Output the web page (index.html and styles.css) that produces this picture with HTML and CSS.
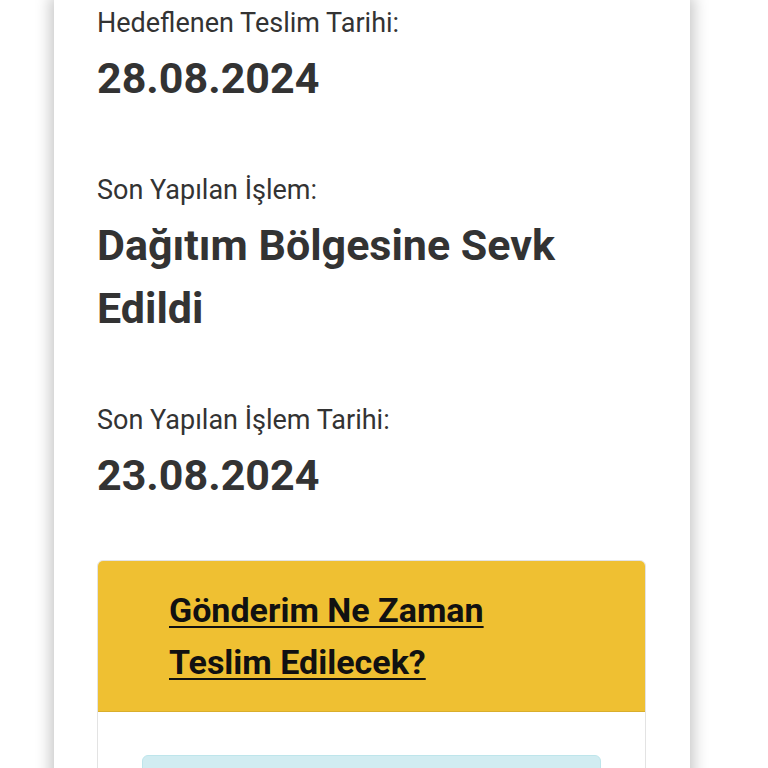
FILE: index.html
```html
<!DOCTYPE html>
<html lang="tr">
<head>
<meta charset="utf-8">
<link rel="stylesheet" href="styles.css">
</head>
<body>
<div class="page">
  <div class="card">
    <div class="fields">
      <div class="field">
        <div class="label">Hedeflenen Teslim Tarihi:</div>
        <div class="value">28.08.2024</div>
      </div>
      <div class="field">
        <div class="label">Son Yapılan İşlem:</div>
        <div class="value">Dağıtım Bölgesine Sevk Edildi</div>
      </div>
      <div class="field">
        <div class="label">Son Yapılan İşlem Tarihi:</div>
        <div class="value">23.08.2024</div>
      </div>
    </div>
    <div class="panel">
      <div class="panel-head">
        <a class="panel-link" href="#">Gönderim Ne Zaman Teslim Edilecek?</a>
      </div>
      <div class="panel-body">
        <div class="info"></div>
      </div>
    </div>
  </div>
</div>
</body>
</html>
```
FILE: styles.css
```css
html, body {
  margin: 0;
  padding: 0;
  background: #ffffff;
  font-family: Roboto, "Liberation Sans", sans-serif;
  color: #333333;
  overflow: hidden;
}
.page {
  padding: 0 78px 0 54px;
}
.card {
  background: #ffffff;
  box-shadow: 0 0 14px 4px rgba(0, 0, 0, 0.22);
  padding: 6px 44px 0 43px;
  min-height: 800px;
}
.fields {
  display: flex;
  flex-direction: column;
  gap: 63px;
}
.label {
  font-size: 27px;
  line-height: 34px;
}
.value {
  font-size: 43px;
  font-weight: 700;
  line-height: 63px;
  margin-top: 7px;
  padding-right: 60px;
}
.panel {
  margin-top: 53px;
  border: 1px solid #e3e3e3;
  border-radius: 6px;
  overflow: hidden;
}
.panel-head {
  background: #efc032;
  padding: 23px 120px 23px 71px;
  border-bottom: 1px solid #d9ae2c;
}
.panel-link {
  color: #111111;
  font-size: 34px;
  font-weight: 700;
  line-height: 52px;
  text-decoration: underline;
  text-decoration-thickness: 2px;
  text-underline-offset: 4px;
}
.panel-body {
  background: #ffffff;
  padding: 43px 44px 0 44px;
}
.info {
  background: #d1ecf1;
  border: 1px solid #bee5eb;
  border-radius: 6px;
  height: 120px;
}
```
